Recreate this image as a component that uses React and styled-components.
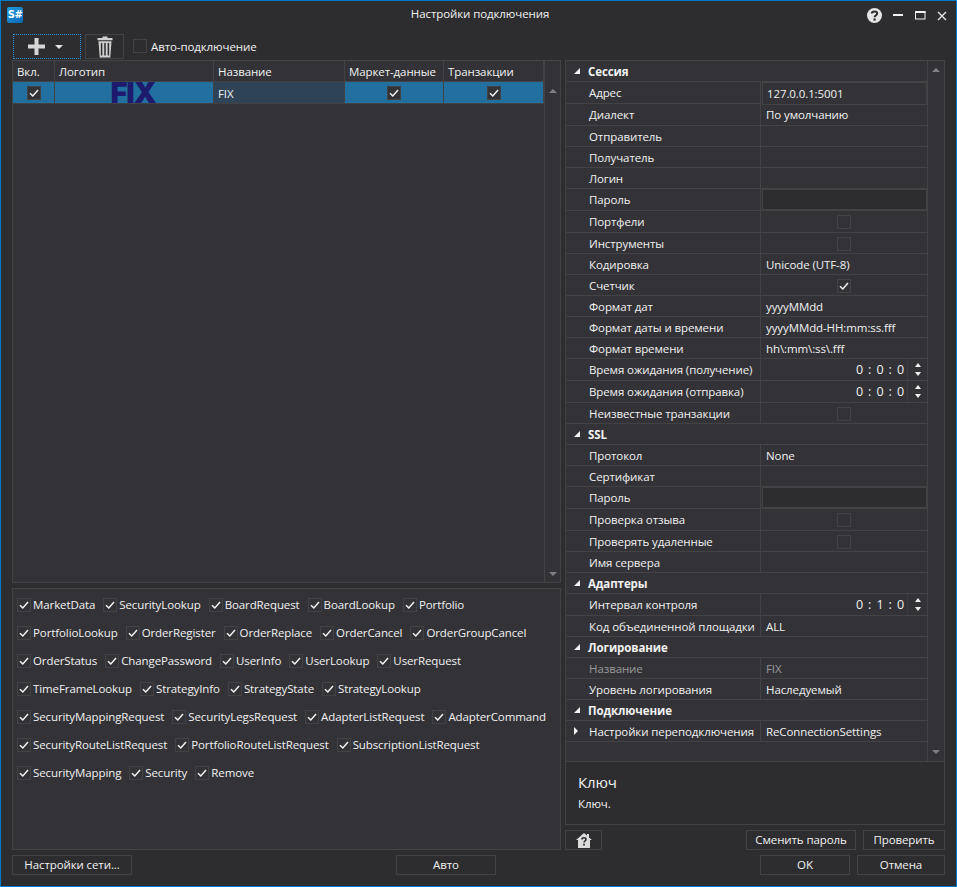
import React from "react";
import styled, { createGlobalStyle } from "styled-components";

const GlobalStyle = createGlobalStyle`
  html, body {
    margin: 0;
    padding: 0;
    background: #2d2d30;
  }
  * {
    box-sizing: border-box;
  }
`;

const line = "#434346";
const panel = "#333337";

const Win = styled.div`
  width: 957px;
  height: 887px;
  border: 1px solid #007acc;
  background: #2d2d30;
  color: #f1f1f1;
  font-family: "Open Sans", "Liberation Sans", sans-serif;
  font-size: 11.5px;
  letter-spacing: -0.1px;
  display: flex;
  flex-direction: column;
  overflow: hidden;
`;

const TitleBar = styled.div`
  height: 33px;
  flex: none;
  position: relative;
  display: flex;
  align-items: flex-start;
  justify-content: space-between;
  padding: 6px 9px 0 6px;
`;

const Title = styled.div`
  position: absolute;
  left: 0;
  right: 0;
  top: 5px;
  padding-left: 3px;
  text-align: center;
  line-height: 16px;
`;

const AppLogo = styled.div`
  width: 16px;
  height: 16px;
  border-radius: 2px;
  background: linear-gradient(135deg, #1f9be0, #0a68b4);
  color: #fff;
  font: bold 10px/16px "DejaVu Sans", sans-serif;
  letter-spacing: -0.5px;
  text-align: center;
`;

const WinButtons = styled.div`
  display: flex;
  align-items: center;
  gap: 11px;
  margin-top: 1px;
`;

const Toolbar = styled.div`
  height: 26px;
  flex: none;
  display: flex;
  align-items: stretch;
  padding-left: 12px;
`;

const AddButton = styled.div`
  width: 68px;
  height: 25px;
  border: 1px dotted #2a90d8;
  display: flex;
  align-items: center;
  padding-left: 14px;
  gap: 10px;
`;

const Caret = styled.div`
  width: 0;
  height: 0;
  border-left: 4px solid transparent;
  border-right: 4px solid transparent;
  border-top: 4px solid #e4e4e4;
`;

const TrashButton = styled.div`
  width: 39px;
  height: 25px;
  margin-left: 4px;
  border: 1px solid ${line};
  display: flex;
  align-items: center;
  justify-content: center;
`;

const AutoLabel = styled.label`
  display: flex;
  align-items: center;
  gap: 4px;
  margin-left: 9px;
  margin-bottom: 2px;
`;

const Box = styled.span`
  width: 14px;
  height: 14px;
  flex: none;
  display: inline-flex;
  align-items: center;
  justify-content: center;
  border: 1px solid ${line};
  background: ${(p) => (p.$solid ? panel : "transparent")};
`;

const Main = styled.div`
  flex: 1;
  min-height: 0;
  display: flex;
  padding: 0 11px 0 11px;
`;

const LeftCol = styled.div`
  width: 549px;
  flex: none;
  display: flex;
  flex-direction: column;
  gap: 5px;
`;

const Grid = styled.div`
  height: 523px;
  flex: none;
  border: 1px solid ${line};
  background: ${panel};
  display: flex;
`;

const GridBody = styled.div`
  width: 531px;
  flex: none;
`;

const GridHead = styled.div`
  display: grid;
  grid-template-columns: 42px 159px 131px 99px 100px;
  height: 21px;
  border-bottom: 1px solid ${line};
`;

const HeadCell = styled.div`
  padding-left: 4px;
  line-height: 21px;
  border-right: 1px solid ${line};
  white-space: nowrap;
  overflow: hidden;
`;

const GridRow = styled.div`
  display: grid;
  grid-template-columns: 42px 159px 131px 99px 100px;
  height: 22px;
  background: #22709f;
  border-bottom: 1px solid ${line};
`;

const RowCell = styled.div`
  display: flex;
  align-items: center;
  justify-content: ${(p) => (p.$text ? "flex-start" : "center")};
  padding-left: ${(p) => (p.$text ? "4px" : "0")};
  padding-top: ${(p) => (p.$text ? "1px" : "0")};
  background: ${(p) => (p.$dim ? "#2e4356" : "transparent")};
  border-right: 1px solid ${line};
`;

const FixLogo = styled.span`
  color: #1e1a6e;
  font: 900 29px/21px "Inter", "Liberation Sans", sans-serif;
  letter-spacing: -1px;
  margin-right: 2px;
`;

const ScrollBar = styled.div`
  flex: 1;
  display: flex;
  flex-direction: column;
  align-items: center;
  justify-content: space-between;
  padding: ${(p) => p.$pad || "28px 0 6px"};
  border-left: 1px solid ${line};
`;

const Arrow = styled.div`
  width: 0;
  height: 0;
  border-left: 4px solid transparent;
  border-right: 4px solid transparent;
  ${(p) => (p.$down ? "border-top" : "border-bottom")}: 4px solid #808083;
`;

const Messages = styled.div`
  flex: 1;
  border: 1px solid ${line};
  background: ${panel};
  padding: 9px 0 0 4px;
  display: flex;
  flex-direction: column;
  gap: 14px;
`;

const MessageRow = styled.div`
  display: flex;
  gap: 8px;
  height: 14px;
`;

const Message = styled.label`
  display: flex;
  align-items: center;
  gap: 2px;
  line-height: 14px;
  white-space: nowrap;
`;

const Splitter = styled.div`
  width: 4px;
  flex: none;
`;

const RightCol = styled.div`
  flex: 1;
  min-width: 0;
  display: flex;
  flex-direction: column;
`;

const PropBox = styled.div`
  height: 702px;
  flex: none;
  border: 1px solid ${line};
  background: ${panel};
  display: flex;
`;

const PropList = styled.div`
  width: 361px;
  flex: none;
`;

const PropRow = styled.div`
  height: ${(p) => (p.$tall ? 22 : 21)}px;
  display: grid;
  grid-template-columns: 195px 1fr;
  border-bottom: 1px solid ${line};
`;

const GroupRow = styled.div`
  height: 21px;
  display: flex;
  align-items: center;
  border-bottom: 1px solid ${line};
  font-weight: 700;
  padding-left: 8px;
  gap: 8px;
`;

const GroupArrow = styled.svg`
  width: 6px;
  height: 6px;
  flex: none;
`;

const PropName = styled.div`
  position: relative;
  padding-left: 23px;
  line-height: 21px;
  white-space: nowrap;
  border-right: 1px solid ${line};
  color: ${(p) => (p.$off ? "#9a9a9a" : "inherit")};
`;

const Expander = styled.svg`
  position: absolute;
  left: 7px;
  top: 6px;
  width: 6px;
  height: 8px;
`;

const PropValue = styled.div`
  display: flex;
  align-items: center;
  justify-content: ${(p) => (p.$center ? "center" : "flex-start")};
  padding-left: ${(p) => (p.$center ? "0" : "5px")};
  color: ${(p) => (p.$off ? "#9a9a9a" : "inherit")};
  white-space: nowrap;
`;

const BoxValue = styled(PropValue)`
  padding-left: 0;
`;

const ValueBox = styled.div`
  flex: 1;
  height: 100%;
  margin-left: 1px;
  padding-left: 4px;
  line-height: 21px;
  border: 1px solid ${line};
  background: ${(p) => (p.$empty ? "#2d2d30" : panel)};
`;

const Spin = styled.div`
  flex: 1;
  display: flex;
  align-items: center;
  justify-content: flex-end;
  height: 100%;
`;

const SpinText = styled.span`
  font-size: 12.5px;
  word-spacing: 2px;
  padding-right: 3px;
`;

const SpinButtons = styled.div`
  width: 20px;
  height: 100%;
  display: flex;
  flex-direction: column;
  align-items: center;
  justify-content: center;
  gap: 5px;
  border-left: 1px solid #3b3b3f;
`;

const SpinArrow = styled.div`
  width: 0;
  height: 0;
  border-left: 3px solid transparent;
  border-right: 3px solid transparent;
  ${(p) => (p.$down ? "border-top" : "border-bottom")}: 4px solid #f1f1f1;
`;

const Desc = styled.div`
  height: 63px;
  flex: none;
  border: 1px solid ${line};
  border-top: none;
  padding: 10px 0 0 12px;
`;

const DescTitle = styled.div`
  font-size: 15px;
  line-height: 20px;
`;

const DescText = styled.div`
  line-height: 16px;
  margin-top: 4px;
`;

const Actions = styled.div`
  display: flex;
  align-items: center;
  margin-top: 5px;
  gap: 7px;
`;

const Btn = styled.div`
  height: 20px;
  width: ${(p) => p.$w}px;
  flex: none;
  border: 1px solid ${line};
  background: #2d2d30;
  text-align: center;
  line-height: 18px;
  white-space: nowrap;
  ${(p) => p.$push && "margin-left: auto;"}
`;

const HomeBtn = styled(Btn)`
  display: flex;
  align-items: center;
  justify-content: center;
`;

const Footer = styled.div`
  flex: none;
  height: 36px;
  padding: 5px 11px 11px;
  display: grid;
  grid-template-columns: 120px 264px 100px 264px 90px 7px 88px;
`;

const Tick = () => (
  <svg width="10" height="10" viewBox="0 0 10 10">
    <path d="M1 5.2 L3.8 8 L9 2" fill="none" stroke="#f1f1f1" strokeWidth="1.5" />
  </svg>
);

const Check = ({ on, solid }) => <Box $solid={solid}>{on && <Tick />}</Box>;

const HelpIcon = () => (
  <svg width="15" height="15" viewBox="0 0 15 15">
    <circle cx="7.5" cy="7.5" r="7.5" fill="#e6e6e6" />
    <path d="M4.8 5.6 C4.8 2.8 10.2 2.8 10.2 5.6 C10.2 7.4 7.6 7.2 7.6 9.2" fill="none" stroke="#2d2d30" strokeWidth="2" />
    <rect x="6.5" y="10.4" width="2.2" height="2.2" fill="#2d2d30" />
  </svg>
);

const MinIcon = () => (
  <svg width="11" height="11" viewBox="0 0 11 11">
    <rect x="0" y="4" width="10" height="2" fill="#f1f1f1" />
  </svg>
);

const MaxIcon = () => (
  <svg width="11" height="11" viewBox="0 0 11 11">
    <rect x="0.5" y="1.5" width="9.5" height="7.5" fill="none" stroke="#f1f1f1" />
    <rect x="0" y="1" width="10.5" height="2" fill="#f1f1f1" />
  </svg>
);

const CloseIcon = () => (
  <svg width="10" height="10" viewBox="0 0 10 10">
    <path d="M1 1 L9 9 M9 1 L1 9" stroke="#e4e4e4" strokeWidth="1.4" />
  </svg>
);

const PlusIcon = () => (
  <svg width="17" height="17" viewBox="0 0 17 17">
    <path d="M6.5 0 H10.5 V6.5 H17 V10.5 H10.5 V17 H6.5 V10.5 H0 V6.5 H6.5 Z" fill="#d6d6d6" />
  </svg>
);

const TrashIcon = () => (
  <svg width="16" height="22" viewBox="0 0 16 22">
    <path d="M5.5 2 V0.6 H10.5 V2 H15.5 V4.2 H0.5 V2 Z" fill="#cfcfcf" />
    <path d="M1.5 5.2 H14.5 L13.3 21.4 H2.7 Z" fill="#cfcfcf" />
    <path d="M4.6 7 V19.6 M8 7 V19.6 M11.4 7 V19.6" stroke="#2d2d30" strokeWidth="1.5" />
  </svg>
);

const HomeIcon = () => (
  <svg width="16" height="15" viewBox="0 0 16 15">
    <path d="M8 0 L11 2.6 V1 H13 V4.4 L16 7 H14 V15 H2 V7 H0 Z" fill="#dcdcdc" />
    <path d="M6 6.4 C6 4.2 10 4.2 10 6.4 C10 7.9 8 7.7 8 9.6" fill="none" stroke="#2d2d30" strokeWidth="1.6" />
    <rect x="7.1" y="10.7" width="1.8" height="1.8" fill="#2d2d30" />
  </svg>
);

const props = [
  { group: "Сессия" },
  { name: "Адрес", box: "127.0.0.1:5001", tall: true },
  { name: "Диалект", value: "По умолчанию", tall: true },
  { name: "Отправитель" },
  { name: "Получатель" },
  { name: "Логин" },
  { name: "Пароль", box: "", tall: true },
  { name: "Портфели", check: false, tall: true },
  { name: "Инструменты", check: false },
  { name: "Кодировка", value: "Unicode (UTF-8)" },
  { name: "Счетчик", check: true },
  { name: "Формат дат", value: "yyyyMMdd" },
  { name: "Формат даты и времени", value: "yyyyMMdd-HH:mm:ss.fff" },
  { name: "Формат времени", value: "hh\\:mm\\:ss\\.fff" },
  { name: "Время ожидания (получение)", spin: "0 : 0 : 0", tall: true },
  { name: "Время ожидания (отправка)", spin: "0 : 0 : 0", tall: true },
  { name: "Неизвестные транзакции", check: false },
  { group: "SSL" },
  { name: "Протокол", value: "None" },
  { name: "Сертификат" },
  { name: "Пароль", box: "", tall: true },
  { name: "Проверка отзыва", check: false, tall: true },
  { name: "Проверять удаленные", check: false },
  { name: "Имя сервера" },
  { group: "Адаптеры" },
  { name: "Интервал контроля", spin: "0 : 1 : 0", tall: true },
  { name: "Код объединенной площадки", value: "ALL" },
  { group: "Логирование" },
  { name: "Название", value: "FIX", off: true },
  { name: "Уровень логирования", value: "Наследуемый" },
  { group: "Подключение" },
  { name: "Настройки переподключения", value: "ReConnectionSettings", expand: true },
];

const messages = [
  ["MarketData", "SecurityLookup", "BoardRequest", "BoardLookup", "Portfolio"],
  ["PortfolioLookup", "OrderRegister", "OrderReplace", "OrderCancel", "OrderGroupCancel"],
  ["OrderStatus", "ChangePassword", "UserInfo", "UserLookup", "UserRequest"],
  ["TimeFrameLookup", "StrategyInfo", "StrategyState", "StrategyLookup"],
  ["SecurityMappingRequest", "SecurityLegsRequest", "AdapterListRequest", "AdapterCommand"],
  ["SecurityRouteListRequest", "PortfolioRouteListRequest", "SubscriptionListRequest"],
  ["SecurityMapping", "Security", "Remove"],
];

const PropItem = ({ item }) => {
  if (item.group) {
    return (
      <GroupRow>
        <GroupArrow viewBox="0 0 6 6">
          <path d="M6 0 V6 H0 Z" fill="#f1f1f1" />
        </GroupArrow>
        {item.group}
      </GroupRow>
    );
  }
  let value = <PropValue $off={item.off}>{item.value}</PropValue>;
  if (item.box !== undefined) {
    value = (
      <BoxValue>
        <ValueBox $empty={!item.box}>{item.box}</ValueBox>
      </BoxValue>
    );
  } else if (item.check !== undefined) {
    value = (
      <PropValue $center>
        <Check on={item.check} />
      </PropValue>
    );
  } else if (item.spin) {
    value = (
      <BoxValue>
        <Spin>
          <SpinText>{item.spin}</SpinText>
          <SpinButtons>
            <SpinArrow />
            <SpinArrow $down />
          </SpinButtons>
        </Spin>
      </BoxValue>
    );
  }
  return (
    <PropRow $tall={item.tall}>
      <PropName $off={item.off}>
        {item.expand && (
          <Expander viewBox="0 0 6 8">
            <path d="M1 0 L5 4 L1 8 Z" fill="#f1f1f1" />
          </Expander>
        )}
        {item.name}
      </PropName>
      {value}
    </PropRow>
  );
};

const App = () => {
  return (
    <>
      <GlobalStyle />
      <Win>
        <TitleBar>
          <AppLogo>S#</AppLogo>
          <Title>Настройки подключения</Title>
          <WinButtons>
            <HelpIcon />
            <MinIcon />
            <MaxIcon />
            <CloseIcon />
          </WinButtons>
        </TitleBar>

        <Toolbar>
          <AddButton>
            <PlusIcon />
            <Caret />
          </AddButton>
          <TrashButton>
            <TrashIcon />
          </TrashButton>
          <AutoLabel>
            <Check />
            Авто-подключение
          </AutoLabel>
        </Toolbar>

        <Main>
          <LeftCol>
            <Grid>
              <GridBody>
                <GridHead>
                  <HeadCell>Вкл.</HeadCell>
                  <HeadCell>Логотип</HeadCell>
                  <HeadCell>Название</HeadCell>
                  <HeadCell>Маркет-данные</HeadCell>
                  <HeadCell>Транзакции</HeadCell>
                </GridHead>
                <GridRow>
                  <RowCell>
                    <Check on solid />
                  </RowCell>
                  <RowCell>
                    <FixLogo>FIX</FixLogo>
                  </RowCell>
                  <RowCell $text $dim>
                    FIX
                  </RowCell>
                  <RowCell>
                    <Check on solid />
                  </RowCell>
                  <RowCell>
                    <Check on solid />
                  </RowCell>
                </GridRow>
              </GridBody>
              <ScrollBar>
                <Arrow />
                <Arrow $down />
              </ScrollBar>
            </Grid>
            <Messages>
              {messages.map((row) => (
                <MessageRow key={row[0]}>
                  {row.map((m) => (
                    <Message key={m}>
                      <Check on />
                      {m}
                    </Message>
                  ))}
                </MessageRow>
              ))}
            </Messages>
          </LeftCol>
          <Splitter />
          <RightCol>
            <PropBox>
              <PropList>
                {props.map((item, i) => (
                  <PropItem key={i} item={item} />
                ))}
              </PropList>
              <ScrollBar $pad="7px 0 7px">
                <Arrow />
                <Arrow $down />
              </ScrollBar>
            </PropBox>
            <Desc>
              <DescTitle>Ключ</DescTitle>
              <DescText>Ключ.</DescText>
            </Desc>
            <Actions>
              <HomeBtn $w={37}>
                <HomeIcon />
              </HomeBtn>
              <Btn $w={110} $push>
                Сменить пароль
              </Btn>
              <Btn $w={82}>Проверить</Btn>
            </Actions>
          </RightCol>
        </Main>

        <Footer>
          <Btn $w={120}>Настройки сети...</Btn>
          <span />
          <Btn $w={100}>Авто</Btn>
          <span />
          <Btn $w={90}>OK</Btn>
          <span />
          <Btn $w={88}>Отмена</Btn>
        </Footer>
      </Win>
    </>
  );
};

export default App;
